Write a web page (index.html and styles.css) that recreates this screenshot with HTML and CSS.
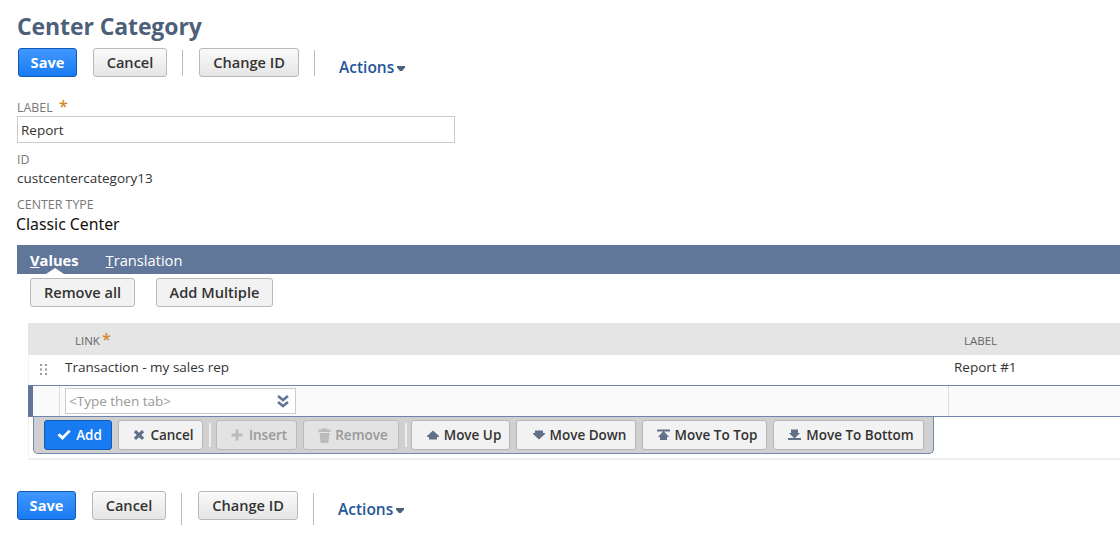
FILE: index.html
```html
<!DOCTYPE html>
<html lang="en">
<head>
    <meta charset="UTF-8">
    <meta name="viewport" content="width=device-width, initial-scale=1.0">
    <title>Center Category</title>
    <link rel="stylesheet" href="styles.css">
</head>
<body>
    <h1>Center Category</h1>
    <div class="button-bar">
        <button class="btn btn-primary btn-save">Save</button>
        <button class="btn btn-cancel">Cancel</button>
        <span class="divider"></span>
        <button class="btn btn-change">Change ID</button>
        <span class="divider"></span>
        <a class="actions">Actions<svg width="8" height="5" viewBox="0 0 8 5"><path d="M0 0h8v1.500L5 5H3L0 1.500z"/></svg></a>
    </div>

    <div class="fields">
        <label class="field-label" for="label">LABEL <span class="required">*</span></label>
        <input type="text" id="label" class="text-input" value="Report">
        <div class="field-label id-label">ID</div>
        <div class="field-value">custcentercategory13</div>
        <div class="field-label type-label">CENTER TYPE</div>
        <div class="type-value">Classic Center</div>
    </div>

    <div class="tabs">
        <a class="tab active"><span class="key">V</span>alues</a>
        <a class="tab"><span class="key">T</span>ranslation</a>
    </div>
    <div class="list-buttons">
        <button class="btn btn-flat btn-remove-all">Remove all</button>
        <button class="btn btn-flat btn-multiple">Add Multiple</button>
    </div>

    <div class="list">
        <div class="row header">
            <span></span>
            <span class="head-cell">LINK<span class="required">*</span></span>
            <span class="head-cell">LABEL</span>
        </div>
        <div class="row item">
            <span class="grip">
                <svg width="7" height="11" viewBox="0 0 7 11"><path d="M0 0h2v2H0zM5 0h2v2H5zM0 4.5h2v2H0zM5 4.5h2v2H5zM0 9h2v2H0zM5 9h2v2H5z"/></svg>
            </span>
            <span class="cell">Transaction - my sales rep</span>
            <span class="cell">Report #1</span>
        </div>
        <div class="row edit">
            <span></span>
            <div class="edit-cell">
                <div class="select">
                    <span>&lt;Type then tab&gt;</span>
                    <svg width="12" height="13" viewBox="0 0 12 13"><path d="M1 1l5 4 5-4M1 7l5 4 5-4"/></svg>
                </div>
            </div>
            <div class="edit-cell"></div>
        </div>
        <div class="toolbar">
            <button class="tool tool-add"><svg width="14" height="12" viewBox="0 0 14 12"><path d="M0.5 6.2l2-2 3 2.7L11.700 0.700l2 1.900L5.500 11z"/></svg>Add</button>
            <button class="tool tool-cancel"><svg width="12" height="12" viewBox="0 0 12 12"><path d="M0.800 3.200L3 1l3 2.800L9 1l2.200 2.200L8.300 6l2.900 2.800L9 11 6 8.200 3 11 0.800 8.800 3.700 6z"/></svg>Cancel</button>
            <span class="tool-divider"></span>
            <button class="tool tool-insert" disabled><svg width="12" height="12" viewBox="0 0 12 12"><path d="M4.500 0.500h3v4h4v3h-4v4h-3v-4h-4v-3h4z"/></svg>Insert</button>
            <button class="tool tool-remove" disabled><svg width="13" height="15" viewBox="0 0 13 15"><path d="M0.500 1.500h3.500V0.500h5v1h3.500v2.500h-12zM1.500 5h10l-1.200 10H2.700z"/></svg>Remove</button>
            <span class="tool-divider"></span>
            <button class="tool tool-up"><svg width="12" height="10" viewBox="0 0 12 10"><path d="M6 0.500L12 6v1h-2V9.500H2V7H0V6z"/></svg>Move Up</button>
            <button class="tool tool-down"><svg width="12" height="10" viewBox="0 0 12 10"><path d="M6 9.500L0 4V3h2V0.500h8V3h2v1z"/></svg>Move Down</button>
            <button class="tool tool-top"><svg width="13" height="12" viewBox="0 0 13 12"><path d="M0 0.500h13v2H0zM6.500 2L12 8h-2v3H3V8H1z"/></svg>Move To Top</button>
            <button class="tool tool-bottom"><svg width="13" height="12" viewBox="0 0 13 12"><path d="M0 9h13v2H0zM6.500 9.500L1 4h2V0.500h7V4h2z"/></svg>Move To Bottom</button>
        </div>
    </div>

    <div class="button-bar bottom-bar">
        <button class="btn btn-primary btn-save">Save</button>
        <button class="btn btn-cancel">Cancel</button>
        <span class="divider"></span>
        <button class="btn btn-change">Change ID</button>
        <span class="divider"></span>
        <a class="actions">Actions<svg width="8" height="5" viewBox="0 0 8 5"><path d="M0 0h8v1.500L5 5H3L0 1.500z"/></svg></a>
    </div>
</body>
</html>
```
FILE: styles.css
```css
* {
    box-sizing: border-box;
}
body {
    margin: 0;
    padding: 10px 0 0 17px;
    height: 558px;
    overflow: hidden;
    background: #fff;
    color: #333;
    font-family: 'Open Sans', sans-serif;
    font-size: 13.5px;
    white-space: nowrap;
}
h1 {
    margin: 0;
    height: 38px;
    line-height: 33px;
    font-size: 23px;
    font-weight: 700;
    letter-spacing: -0.1px;
    color: #4d5f79;
}
button {
    font-family: inherit;
    white-space: nowrap;
}
/* Main buttons */
.button-bar {
    display: flex;
    height: 34px;
    padding-left: 1px;
}
.btn {
    height: 29px;
    padding: 0;
    border: 1px solid #b9b9b9;
    border-radius: 3px;
    background: linear-gradient(#fafafa, #e5e5e5);
    color: #333;
    font-size: 14.6px;
    font-weight: 600;
    line-height: 27px;
}
.btn-primary {
    border-color: #125ab2;
    background: linear-gradient(#4297ff, #187bf2);
    color: #fff;
    font-weight: 700;
}
.btn-save {
    width: 59px;
    margin-right: 16px;
}
.btn-cancel {
    width: 74px;
}
.btn-change {
    width: 100px;
}
.btn-flat {
    background: #f2f2f2;
}
.divider {
    width: 1px;
    height: 26px;
    margin: 2px 16px 0 15px;
    background: #bbb;
}
.actions {
    margin: 9px 0 0 8px;
    line-height: 20px;
    font-size: 15.5px;
    font-weight: 600;
    color: #255599;
}
.actions svg {
    margin: 0 0 2px 3px;
    fill: #4d5f79;
}
/* Fields */
.fields {
    height: 163px;
    padding-top: 17px;
}
.field-label {
    display: block;
    height: 18px;
    line-height: 18px;
    font-size: 12.4px;
    color: #777;
}
.required {
    margin-left: 3px;
    font-size: 16px;
    font-weight: 600;
    line-height: 12px;
    color: #d08a2c;
}
.text-input {
    display: block;
    width: 438px;
    height: 27px;
    margin-top: -1px;
    padding: 1px 3px 0;
    border: 1px solid #ccc;
    color: #333;
    font-family: inherit;
    font-size: 13.5px;
}
.id-label {
    margin-top: 8px;
}
.field-value {
    height: 18px;
    line-height: 18px;
}
.type-label {
    margin-top: 9px;
}
.type-value {
    height: 20px;
    margin-left: -1px;
    line-height: 20px;
    font-family: 'Noto Sans', sans-serif;
    font-size: 15.8px;
    color: #111;
}
/* Tabs */
.tabs {
    display: flex;
    gap: 27px;
    height: 29px;
    padding-left: 13px;
    background: #607799;
}
.tab {
    height: 29px;
    line-height: 31px;
    font-size: 14.7px;
    color: #fff;
}
.key {
    text-decoration: underline;
}
.tab.active {
    position: relative;
    font-weight: 700;
}
.tab.active::after {
    content: '';
    position: absolute;
    left: 16px;
    bottom: 0;
    border: 9px solid transparent;
    border-top: 0;
    border-bottom: 6px solid #fff;
}
.list-buttons {
    display: flex;
    gap: 21px;
    height: 49px;
    padding: 4px 0 0 13px;
}
.btn-remove-all {
    width: 105px;
}
.btn-multiple {
    width: 117px;
}
/* List */
.list {
    height: 137px;
    margin-left: 11px;
    border-bottom: 2px solid #eee;
    border-left: 1px solid #f2f2f2;
}
.row {
    display: grid;
    grid-template-columns: 30px 889px 1fr;
}
.header {
    height: 32px;
    margin-left: -1px;
    padding-left: 1px;
    background: #e5e5e5;
}
.head-cell {
    padding: 1px 0 0 16px;
    line-height: 34px;
    font-size: 11.5px;
    color: #666;
}
.head-cell .required {
    margin-left: 2px;
}
.item {
    height: 30px;
}
.grip {
    padding: 9px 0 0 11px;
    line-height: 0;
}
.grip svg {
    fill: #999;
}
.cell {
    padding-left: 6px;
    line-height: 25px;
}
.edit {
    height: 32px;
    margin-left: -1px;
    border: solid #6d85ad;
    border-width: 1px 0 1px 5px;
    border-left-color: #607799;
    background: #fafafa;
    grid-template-columns: 26px 889px 1fr;
}
.edit-cell {
    padding: 2px 0 0 5px;
    border-left: 1px solid #ddd;
}
.select {
    display: flex;
    justify-content: space-between;
    align-items: center;
    width: 231px;
    height: 26px;
    padding: 0 6px 0 3px;
    border: 1px solid #ccc;
    background: #fff;
    color: #999;
}
.select svg {
    fill: none;
    stroke: #607799;
    stroke-width: 2.6;
}
.toolbar {
    display: flex;
    width: 901px;
    height: 37px;
    margin-left: 4px;
    padding: 3px 0 0 10px;
    border: 1px solid #7388ab;
    border-top: 0;
    border-radius: 0 0 5px 5px;
    background: #d0d0d0;
}
.tool {
    display: flex;
    justify-content: center;
    align-items: center;
    gap: 5px;
    height: 30px;
    margin-right: 6px;
    padding: 0 0 0 5px;
    border: 1px solid #b7b7b7;
    border-radius: 3px;
    background: #f2f2f2;
    color: #333;
    font-size: 13.5px;
    font-weight: 600;
}
.tool svg {
    fill: #607089;
}
.tool:disabled {
    background: #e3e3e3;
    border-color: #bbb;
    color: #999;
}
.tool:disabled svg {
    fill: #bbb;
}
.tool-add {
    width: 68px;
    padding-left: 3px;
    border-color: #125ab2;
    background: #187bf2;
    color: #fff;
}
.tool-add svg {
    fill: #fff;
}
.tool-cancel {
    width: 85px;
    padding-left: 6px;
}
.tool-insert {
    width: 81px;
    gap: 6px;
}
.tool-remove {
    width: 96px;
    padding-left: 4px;
    gap: 4px;
}
.tool-up {
    width: 99px;
    padding-left: 7px;
}
.tool-down {
    width: 120px;
    padding-left: 7px;
}
.tool-top {
    width: 125px;
    padding-left: 5px;
}
.tool-bottom {
    width: 151px;
    padding-left: 5px;
}
.tool-divider {
    width: 2px;
    height: 24px;
    margin: 3px 5px 0 0;
    background: #eee;
}
.tool-remove + .tool-divider {
    margin-right: 4px;
}
/* Bottom buttons */
.bottom-bar {
    padding: 0;
    margin-top: 31px;
}
.bottom-bar .divider {
    height: 32px;
}
.bottom-bar .actions {
    margin-top: 8px;
}
```
